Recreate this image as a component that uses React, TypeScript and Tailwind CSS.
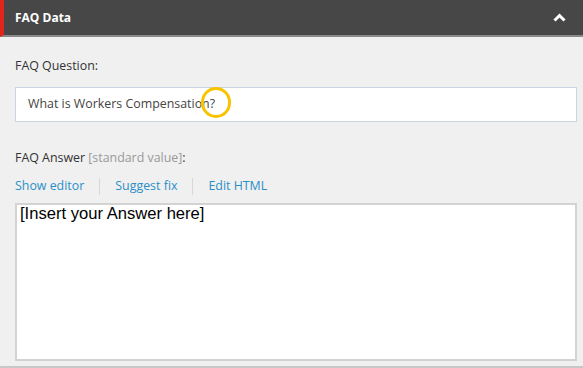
import React from "react";

export default function App() {
  return (
    <div
      className="relative w-[583px] h-[368px] overflow-hidden bg-[#f0f0f0] border-b-2 border-[#c8c8c8]"
      style={{ fontFamily: '"Open Sans", "Liberation Sans", sans-serif' }}
    >
      <div className="flex items-center justify-between h-[37px] bg-[#474747] border-l-[4px] border-[#e0261c] border-b-2 border-b-[#8a8a8a] pl-[11px] pr-[17px]">
        <span className="text-[12px] font-bold text-white leading-none">FAQ Data</span>
        <svg width="13" height="9" viewBox="0 0 13 9" className="mt-[-1px]">
          <path d="M1.5 7.5 L6.5 2.5 L11.5 7.5" fill="none" stroke="white" strokeWidth="3" />
        </svg>
      </div>
      <div className="pl-[15px] pr-[6px] pt-[20px]">
        <div className="text-[12.4px] leading-[18px] text-[#333]">FAQ Question:</div>
        <div className="relative mt-[12px] h-[35px] bg-white border border-[#c9d5e2] flex items-center pl-[12px] text-[12.4px] text-[#444]">
          What is Workers Compensation?
          <div className="absolute left-[185px] top-[-1px] w-[30px] h-[31px] rounded-full border-[3.5px] border-[#f8c300]" />
        </div>
        <div className="mt-[27px] text-[12.4px] leading-[18px] text-[#333]">
          FAQ Answer <span className="text-[#999]">[standard value]</span>:
        </div>
        <div className="mt-[10px] flex items-center text-[12.4px] leading-[18px] text-[#2b8fc7]">
          <span>Show editor</span>
          <span className="mx-[15px] w-px h-[17px] bg-[#d8d8d8]" />
          <span>Suggest fix</span>
          <span className="mx-[15px] w-px h-[17px] bg-[#d8d8d8]" />
          <span>Edit HTML</span>
        </div>
        <div
          className="mt-[8px] h-[158px] bg-white border-2 border-[#d3d3d3] px-[3px] text-[16.6px] leading-[17px] text-black"
          style={{ fontFamily: '"Liberation Sans", Arial, sans-serif' }}
        >
          [Insert your Answer here]
        </div>
      </div>
    </div>
  );
}
